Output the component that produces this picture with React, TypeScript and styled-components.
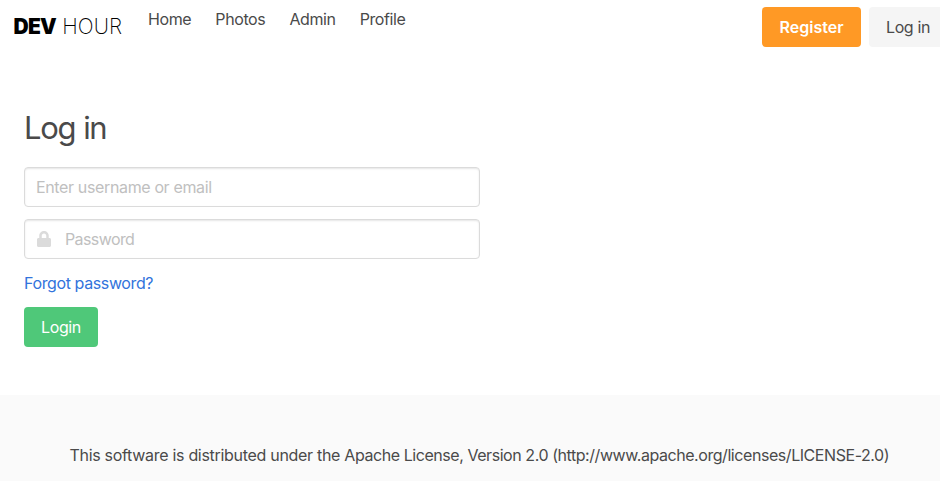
import React from "react";
import styled, { createGlobalStyle } from "styled-components";

const Global = createGlobalStyle`
  *, *::before, *::after { box-sizing: border-box; }
  body { margin: 0; background: #fff; overflow: hidden; color: #4a4a4a;
    font: 400 16px/24px Inter, "Liberation Sans", sans-serif; letter-spacing: -0.385px; }
`;
const Page = styled.div`width: 940px; height: 481px; display: flex; flex-direction: column; overflow: hidden;`;
const Navbar = styled.nav`height: 52px; flex: none; display: flex; align-items: flex-start; white-space: nowrap;`;
const Brand = styled.a`
  width: 136px; height: 54px; padding-left: 13.5px; flex: none; display: flex; align-items: center; gap: 6.5px;
  color: #000; font-size: 21px; line-height: 28px;
`;
const BrandBold = styled.span`font-weight: 900; letter-spacing: -0.8px;`;
const BrandLight = styled.span`font-weight: 250; letter-spacing: 0;`;
const Links = styled.div`display: flex; flex: 1;`;
const NavLink = styled.a`padding: 7px 12px; color: #4a4a4a;`;
const Buttons = styled.div`display: flex; flex: none; gap: 8px; padding-top: 7px; margin-right: -7px;`;
const Button = styled.button<{ $bg: string; $fg: string; $bold?: boolean; $w: number }>`
  width: ${p => p.$w}px; height: 40px; padding: 0; border: 0; border-radius: 4px; flex: none;
  background: ${p => p.$bg}; color: ${p => p.$fg}; font: inherit; font-weight: ${p => (p.$bold ? 600 : 400)};
  letter-spacing: ${p => (p.$bold ? 0 : -0.385)}px;
`;
const Section = styled.main`height: 343px; flex: none; padding: 54px 24px 0; display: flex; flex-direction: column; align-items: flex-start;`;
const Title = styled.h1`margin: 0 0 16px; height: 45px; font-size: 31px; line-height: 44px; font-weight: 400; letter-spacing: -1.3px; word-spacing: 0.5px;`;
const Field = styled.label`
  width: 456px; height: 40px; margin-bottom: 12px; padding: 0 11px; display: flex; align-items: center;
  border: 1px solid #dbdbdb; border-radius: 4px; box-shadow: inset 0 1px 2px rgba(10,10,10,.1);
`;
const LockIcon = styled.svg`width: 14px; height: 16px; margin: 0 14px 0 1px; flex: none; fill: #dbdbdb;`;
const Input = styled.input<{ $tracking: number }>`
  flex: 1; min-width: 0; padding: 0; border: 0; outline: 0; background: none; font: inherit;
  letter-spacing: ${p => p.$tracking}px;
  &::placeholder { color: #c0c0c0; opacity: 1; }
`;
const Forgot = styled.a`color: #3273dc; margin-bottom: 12px;`;
const Footer = styled.footer`flex: 1; padding: 48px 0 0 69.5px; background: #fafafa; white-space: nowrap; letter-spacing: -0.3px;`;
const License = styled.span`letter-spacing: -0.44px;`;

export default function App() {
  return (
    <Page>
      <Global />
      <Navbar>
        <Brand><BrandBold>DEV</BrandBold><BrandLight>HOUR</BrandLight></Brand>
        <Links>
          <NavLink>Home</NavLink><NavLink>Photos</NavLink><NavLink>Admin</NavLink><NavLink>Profile</NavLink>
        </Links>
        <Buttons>
          <Button $w={99} $bg="#ff9925" $fg="#fff" $bold>Register</Button>
          <Button $w={78} $bg="#f5f5f5" $fg="#4a4a4a">Log in</Button>
        </Buttons>
      </Navbar>
      <Section>
        <Title>Log in</Title>
        <Field><Input $tracking={-0.36} placeholder="Enter username or email" /></Field>
        <Field>
          <LockIcon viewBox="0 0 448 512"><path d="M400 224h-24v-72C376 68 308 0 224 0S72 68 72 152v72H48c-27 0-48 21-48 48v192c0 27 21 48 48 48h352c27 0 48-21 48-48V272c0-27-21-48-48-48zm-104 0H152v-72c0-40 32-72 72-72s72 32 72 72v72z" /></LockIcon>
          <Input $tracking={-0.6} type="password" placeholder="Password" />
        </Field>
        <Forgot>Forgot password?</Forgot>
        <Button $w={74} $bg="#4fc879" $fg="#fff">Login</Button>
      </Section>
      <Footer>This software is distributed under the <License>Apache License, Version 2.0 (http://www.apache.org/licenses/LICENSE-2.0)</License></Footer>
    </Page>
  );
}
